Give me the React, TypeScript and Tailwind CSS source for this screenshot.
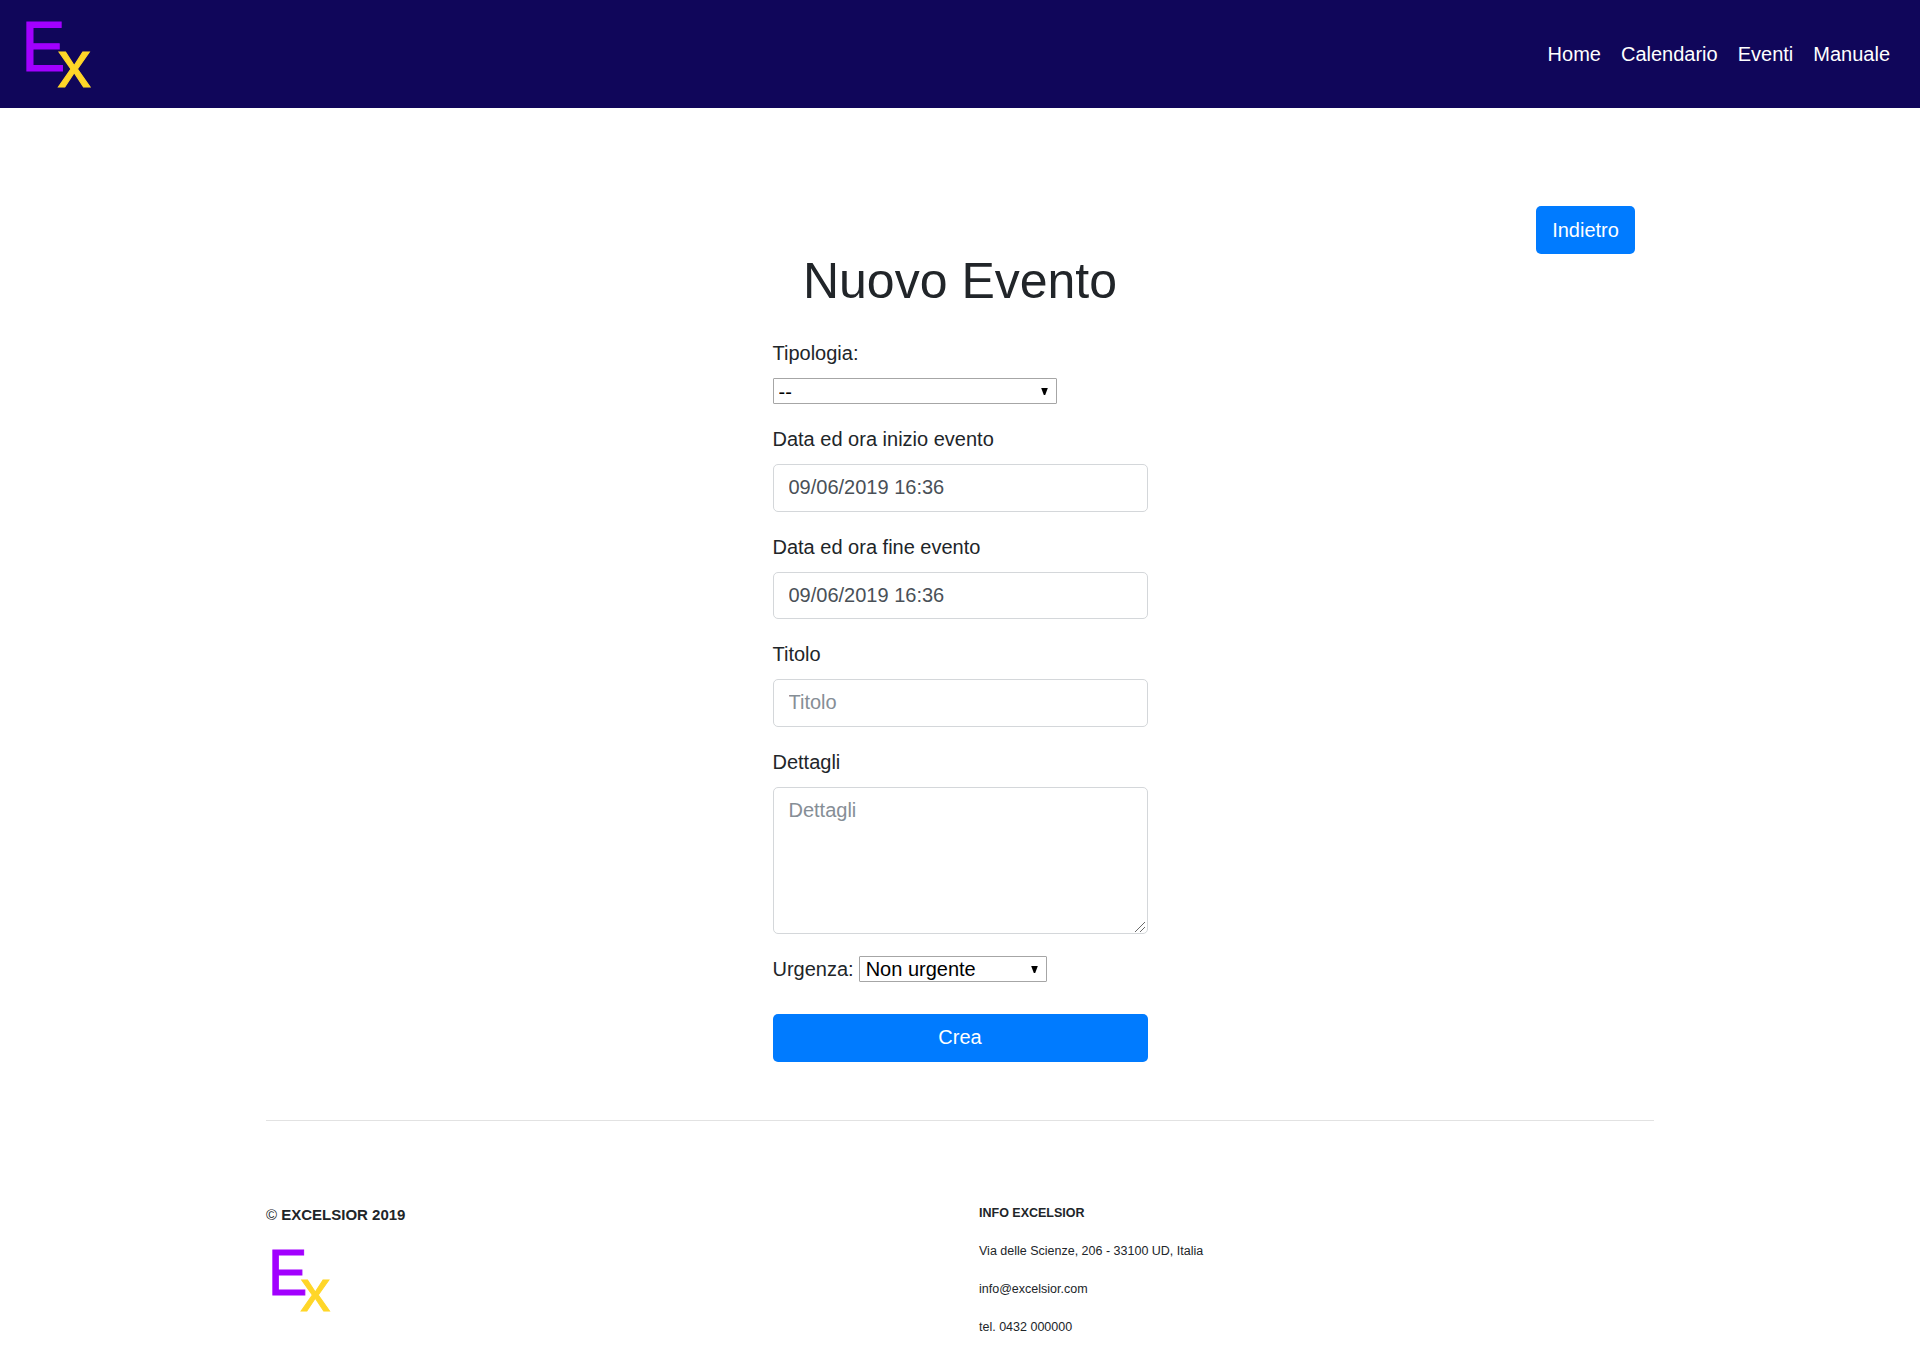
import React from "react";

const links = ["Home", "Calendario", "Eventi", "Manuale"];

function Logo({ className }: { className: string }) {
  return (
    <svg viewBox="0 0 70 72" className={className} aria-label="Ex">
      <g fontFamily="Liberation Sans, Arial, sans-serif" strokeWidth="1.1">
        <text transform="translate(-4.4 50.5) scale(0.925 1)" fontSize="71" fill="#a200ff" stroke="#a200ff">E</text>
        <text transform="translate(31.8 67.4)" fontSize="66" fill="#ffd628" stroke="#ffd628">x</text>
      </g>
    </svg>
  );
}

function Select({
  options,
  className,
  selectClassName,
  id,
}: {
  options: string[];
  className: string;
  selectClassName: string;
  id: string;
}) {
  return (
    <div className={`relative ${className}`}>
      <select
        id={id}
        className={`block h-[26px] w-full appearance-none rounded-[1px] border border-[#a6a6a6] bg-white text-[20px] leading-6 text-black ${selectClassName}`}
      >
        {options.map((o) => (
          <option key={o}>{o}</option>
        ))}
      </select>
      <svg viewBox="0 0 7 7" className="pointer-events-none absolute top-[10px] right-[9px] h-[7px] w-[7px]">
        <path d="M0.2 0h6.6L4.2 7H2.8z" fill="#000" />
      </svg>
    </div>
  );
}

const field =
  "block w-full rounded-[5px] border border-[#d4d7da] bg-white px-[15px] text-[20px] leading-[30px] text-[#495057] placeholder:text-[#868e96]";

function Field({ id, label, children }: { id: string; label: string; children: React.ReactNode }) {
  return (
    <div className="mb-5">
      <label htmlFor={id} className="mb-2.5 block">{label}</label>
      {children}
    </div>
  );
}

export default function App() {
  return (
    <div className="min-h-[1356px] bg-white font-['Liberation_Sans',Arial,sans-serif] text-[20px] leading-[30px] text-[#212529]">
      <header className="flex h-[108px] items-center justify-between bg-[#10065a] pr-[30px] pl-[26px]">
        <Logo className="mt-[4px] h-[72px] w-[70px] overflow-visible" />
        <nav className="flex gap-5 text-white">
          {links.map((l) => (
            <a key={l} href="#">{l}</a>
          ))}
        </nav>
      </header>

      <main className="mx-auto w-[1388px]">
        <div className="flex justify-end pt-[98px] pr-[19px]">
          <button className="h-12 w-[99px] rounded-[5px] bg-[#007bff] text-white">Indietro</button>
        </div>
        <h1 className="-mt-[3px] text-center text-[50px] leading-[60px]">Nuovo Evento</h1>

        <form className="mx-auto mt-[27px] w-[375px]">
          <Field id="tipo" label="Tipologia:">
            <Select id="tipo" options={["--"]} className="w-[284px]" selectClassName="pt-px pl-[5px]" />
          </Field>
          <Field id="inizio" label="Data ed ora inizio evento">
            <input id="inizio" defaultValue="09/06/2019 16:36" className={`${field} h-[47.5px]`} />
          </Field>
          <Field id="fine" label="Data ed ora fine evento">
            <input id="fine" defaultValue="09/06/2019 16:36" className={`${field} h-[47.5px]`} />
          </Field>
          <Field id="titolo" label="Titolo">
            <input id="titolo" placeholder="Titolo" className={`${field} h-[47.5px]`} />
          </Field>
          <Field id="dettagli" label="Dettagli">
            <div className="relative">
              <textarea
                id="dettagli"
                placeholder="Dettagli"
                className={`${field} h-[147.5px] resize-none pt-[7px]`}
              />
              <svg
                viewBox="0 0 10 10"
                className="pointer-events-none absolute right-[3px] bottom-[2px] h-[10px] w-[10px]"
              >
                <path d="M0 10L10 0M5 10L10 5" stroke="#444" strokeWidth="0.8" />
              </svg>
            </div>
          </Field>
          <div className="flex h-[30px] items-center">
            <label htmlFor="urgenza">Urgenza:</label>
            <Select id="urgenza" options={["Non urgente"]} className="ml-[5px] w-[188px]" selectClassName="pl-[6px]" />
          </div>
          <button
            type="button"
            className="mt-[30px] block h-12 w-full rounded-[5px] bg-[#007bff] pb-[2px] text-white"
          >
            Crea
          </button>
        </form>

        <hr className="mt-[58px] border-[#e2e2e2]" />

        <footer className="grid grid-cols-[713px_1fr]">
          <div className="pt-[79px]">
            <p className="text-[15px] font-bold">
              <span className="font-normal">©</span> EXCELSIOR 2019
            </p>
            <Logo className="mt-[20px] ml-[5.5px] h-[64.8px] w-[63px] overflow-visible" />
          </div>
          <div className="flex flex-col gap-[8px] pt-[77px] text-[12.5px]">
            <p className="font-bold">INFO EXCELSIOR</p>
            <p>Via delle Scienze, 206 - 33100 UD, Italia</p>
            <p>info@excelsior.com</p>
            <p>tel. 0432 000000</p>
          </div>
        </footer>
      </main>
    </div>
  );
}
